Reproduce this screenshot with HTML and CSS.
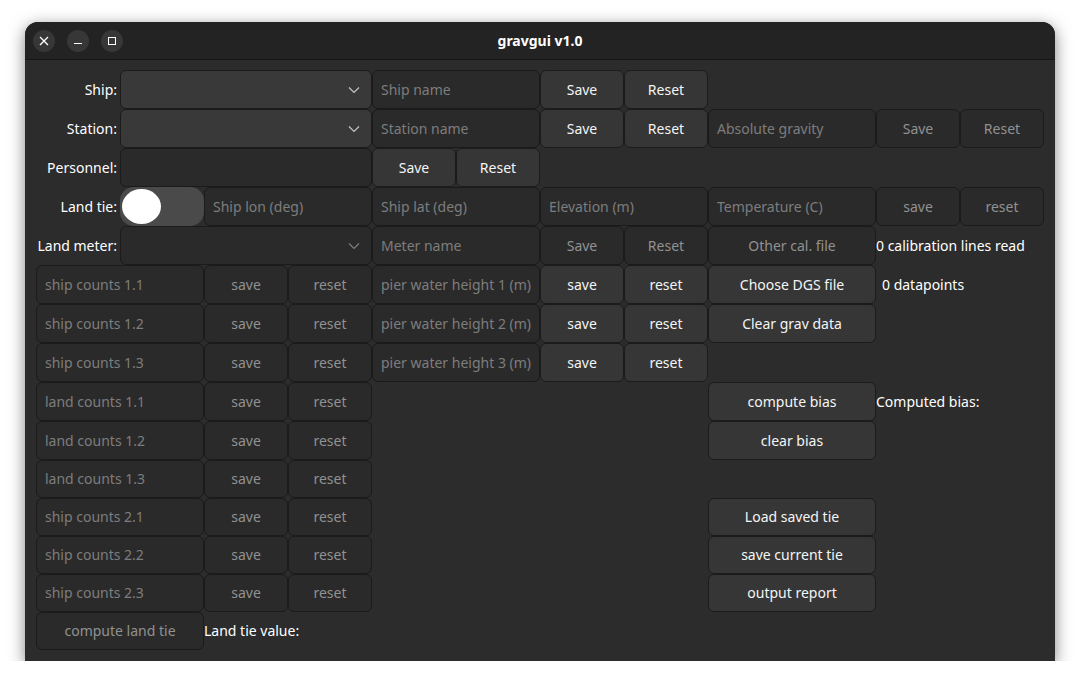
FILE: index.html
```html
<!DOCTYPE html>
<html lang="en">
<head>
    <meta charset="UTF-8">
    <meta name="viewport" content="width=device-width, initial-scale=1.0">
    <title>gravgui v1.0</title>
    <link rel="stylesheet" href="styles.css">
</head>
<body>
    <div class="window">
        <header class="titlebar">
            <div class="winControls">
                <span class="winBtn"><svg width="16" height="16" viewBox="0 0 16 16"><path d="M4 4l8 8M12 4l-8 8" fill="none" stroke="#fff" stroke-width="1.3"/></svg></span>
                <span class="winBtn"><svg width="16" height="16" viewBox="0 0 16 16"><path d="M4 10.5h8" fill="none" stroke="#fff" stroke-width="1"/></svg></span>
                <span class="winBtn"><svg width="16" height="16" viewBox="0 0 16 16"><rect x="4.5" y="4.5" width="7" height="7" fill="none" stroke="#fff" stroke-width="1"/></svg></span>
            </div>
            <h1 class="winTitle">gravgui v1.0</h1>
        </header>

        <main class="formGrid">
            <!-- row 1 -->
            <label class="fieldLabel">Ship:</label>
            <div class="combo span3"><svg class="arrow" width="12" height="12" viewBox="0 0 12 12"><path d="M1 3.5l5 5 5-5" fill="none" stroke="currentColor" stroke-width="1.2"/></svg></div>
            <input class="entry span2" placeholder="Ship name">
            <button class="btn">Save</button>
            <button class="btn">Reset</button>

            <!-- row 2 -->
            <label class="fieldLabel">Station:</label>
            <div class="combo span3"><svg class="arrow" width="12" height="12" viewBox="0 0 12 12"><path d="M1 3.5l5 5 5-5" fill="none" stroke="currentColor" stroke-width="1.2"/></svg></div>
            <input class="entry span2" placeholder="Station name">
            <button class="btn">Save</button>
            <button class="btn">Reset</button>
            <input class="entry span2" placeholder="Absolute gravity">
            <button class="btn off">Save</button>
            <button class="btn off">Reset</button>

            <!-- row 3 -->
            <label class="fieldLabel">Personnel:</label>
            <input class="entry span3">
            <button class="btn">Save</button>
            <button class="btn">Reset</button>

            <!-- row 4 -->
            <label class="fieldLabel">Land tie:</label>
            <div class="switch"><span class="knob"></span></div>
            <input class="entry span2" placeholder="Ship lon (deg)">
            <input class="entry span2" placeholder="Ship lat (deg)">
            <input class="entry span2" placeholder="Elevation (m)">
            <input class="entry span2" placeholder="Temperature (C)">
            <button class="btn off">save</button>
            <button class="btn off">reset</button>

            <!-- row 5 -->
            <label class="fieldLabel">Land meter:</label>
            <div class="combo off span3"><svg class="arrow" width="12" height="12" viewBox="0 0 12 12"><path d="M1 3.5l5 5 5-5" fill="none" stroke="currentColor" stroke-width="1.2"/></svg></div>
            <input class="entry span2" placeholder="Meter name">
            <button class="btn off">Save</button>
            <button class="btn off">Reset</button>
            <button class="btn off span2">Other cal. file</button>
            <span class="note span2">0 calibration lines read</span>

            <!-- row 6 -->
            <input class="entry span2 start1" placeholder="ship counts 1.1">
            <button class="btn off">save</button>
            <button class="btn off">reset</button>
            <input class="entry span2" placeholder="pier water height 1 (m)">
            <button class="btn">save</button>
            <button class="btn">reset</button>
            <button class="btn span2">Choose DGS file</button>
            <span class="note span2 inset">0 datapoints</span>

            <!-- row 7 -->
            <input class="entry span2 start1" placeholder="ship counts 1.2">
            <button class="btn off">save</button>
            <button class="btn off">reset</button>
            <input class="entry span2" placeholder="pier water height 2 (m)">
            <button class="btn">save</button>
            <button class="btn">reset</button>
            <button class="btn span2">Clear grav data</button>

            <!-- row 8 -->
            <input class="entry span2 start1" placeholder="ship counts 1.3">
            <button class="btn off">save</button>
            <button class="btn off">reset</button>
            <input class="entry span2" placeholder="pier water height 3 (m)">
            <button class="btn">save</button>
            <button class="btn">reset</button>

            <!-- row 9 -->
            <input class="entry span2 start1" placeholder="land counts 1.1">
            <button class="btn off">save</button>
            <button class="btn off">reset</button>
            <button class="btn span2 start9">compute bias</button>
            <span class="note span2">Computed bias:</span>

            <!-- row 10 -->
            <input class="entry span2 start1" placeholder="land counts 1.2">
            <button class="btn off">save</button>
            <button class="btn off">reset</button>
            <button class="btn span2 start9">clear bias</button>

            <!-- row 11 -->
            <input class="entry tight span2 start1" placeholder="land counts 1.3">
            <button class="btn tight off">save</button>
            <button class="btn tight off">reset</button>

            <!-- row 12 -->
            <input class="entry tight span2 start1" placeholder="ship counts 2.1">
            <button class="btn tight off">save</button>
            <button class="btn tight off">reset</button>
            <button class="btn tight span2 start9">Load saved tie</button>

            <!-- row 13 -->
            <input class="entry tight span2 start1" placeholder="ship counts 2.2">
            <button class="btn tight off">save</button>
            <button class="btn tight off">reset</button>
            <button class="btn tight span2 start9">save current tie</button>

            <!-- row 14 -->
            <input class="entry tight span2 start1" placeholder="ship counts 2.3">
            <button class="btn tight off">save</button>
            <button class="btn tight off">reset</button>
            <button class="btn tight span2 start9">output report</button>

            <!-- row 15 -->
            <button class="btn tight off span2 start1">compute land tie</button>
            <span class="note tight span2">Land tie value:</span>
        </main>
    </div>
</body>
</html>
```

FILE: styles.css
```css
* {
    margin: 0;
    padding: 0;
    box-sizing: border-box;
}

body {
    background: #fff;
    font-family: "Noto Sans", sans-serif;
    font-size: 14px;
    overflow: hidden;
}

.window {
    width: 1030px;
    height: 639px;
    margin: 22px 25px 0;
    background: #2c2c2c;
    border-radius: 13px 13px 0 0;
    box-shadow: 0 4px 16px rgba(0, 0, 0, 0.5);
    color: #fff;
}

/* Title bar */
.titlebar {
    position: relative;
    height: 38px;
    background: #232323;
    border-bottom: 1px solid #161616;
    border-radius: 13px 13px 0 0;
    display: flex;
    align-items: center;
    justify-content: center;
}

.winControls {
    position: absolute;
    left: 8px;
    top: 8px;
    display: flex;
    gap: 12px;
}

.winBtn {
    width: 22px;
    height: 22px;
    border-radius: 50%;
    background: #373737;
    display: flex;
    align-items: center;
    justify-content: center;
}

.winTitle {
    font-size: 14px;
    font-weight: 700;
}

/* Form grid */
.formGrid {
    display: grid;
    grid-template-columns: repeat(12, 84px);
    grid-template-rows: repeat(10, 39px) repeat(5, 38px);
    padding: 10px 0 0 11px;
}

.span2 { grid-column-end: span 2; }
.span3 { grid-column-end: span 3; }
.start1 { grid-column-start: 1; }
.start9 { grid-column-start: 9; }

.fieldLabel {
    grid-column-start: 1;
    display: flex;
    align-items: center;
    justify-content: flex-end;
    padding-right: 3px;
    color: #fff;
    white-space: nowrap;
}

.note {
    display: flex;
    align-items: center;
    white-space: nowrap;
    color: #fff;
}

.note.inset {
    padding-left: 6px;
}

.entry, .btn, .combo {
    border: 1px solid #1b1b1b;
    border-radius: 6px;
    font-family: inherit;
    font-size: 14px;
    min-width: 0;
}

.entry {
    background: #2a2a2a;
    color: #fff;
    padding: 0 8px;
    outline: none;
}

.entry::placeholder {
    color: #7d7d7d;
    opacity: 1;
}

.btn {
    background: #363636;
    color: #f4f4f4;
}

.btn.off {
    background: #2a2a2a;
    color: #919191;
}

/* rows that are only 38px tall sit the text a pixel higher */
.tight {
    padding-bottom: 1px;
}

.combo {
    background: #393939;
    color: #c4c4c4;
    display: flex;
    align-items: center;
    justify-content: flex-end;
    padding-right: 11px;
}

.combo.off {
    background: #2a2a2a;
    color: #7d7d7d;
}

/* Toggle */
.switch {
    background: #4a4a4a;
    border-radius: 14px;
    padding: 2px;
}

.knob {
    display: block;
    width: 39px;
    height: 35px;
    background: #fff;
    border-radius: 50%;
}
```
